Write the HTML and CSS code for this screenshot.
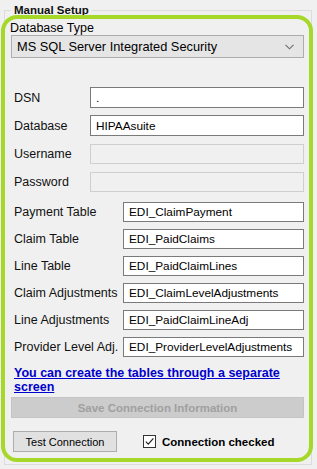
FILE: index.html
```html
<!DOCTYPE html>
<html lang="en">
<head>
    <meta charset="UTF-8">
    <meta name="viewport" content="width=device-width, initial-scale=1.0">
    <title>Manual Setup</title>
    <link rel="stylesheet" href="styles.css">
</head>
<body>
    <fieldset class="setup">
        <legend class="setup-title">Manual Setup</legend>

        <div class="type-label">Database Type</div>
        <div class="select">
            <span>MS SQL Server Integrated Security</span>
            <svg class="chevron" width="9" height="6" viewBox="0 0 9 6"><path d="M0.5 0.8 L4.5 4.8 L8.5 0.8" fill="none" stroke="#6d6d6d" stroke-width="1.1"/></svg>
        </div>

        <div class="form-grid conn-grid">
            <label>DSN</label><div class="field">.</div>
            <label>Database</label><div class="field">HIPAAsuite</div>
            <label>Username</label><div class="field is-disabled"></div>
            <label>Password</label><div class="field is-disabled"></div>
        </div>

        <div class="form-grid table-grid">
            <label>Payment Table</label><div class="field">EDI_ClaimPayment</div>
            <label>Claim Table</label><div class="field">EDI_PaidClaims</div>
            <label>Line Table</label><div class="field">EDI_PaidClaimLines</div>
            <label>Claim Adjustments</label><div class="field">EDI_ClaimLevelAdjustments</div>
            <label>Line Adjustments</label><div class="field">EDI_PaidClaimLineAdj</div>
            <label>Provider Level Adj.</label><div class="field">EDI_ProviderLevelAdjustments</div>
        </div>

        <a class="tables-link" href="#">You can create the tables through a separate<br>screen</a>

        <button class="save-btn" disabled>Save Connection Information</button>

        <div class="footer-row">
            <button class="test-btn">Test Connection</button>
            <label class="check">
                <span class="check-box">
                    <svg width="11" height="11" viewBox="0 0 11 11"><path d="M1.8 5.6 L4.3 8.2 L9.4 2.4" fill="none" stroke="#222" stroke-width="1.2"/></svg>
                </span>
                Connection checked
            </label>
        </div>
    </fieldset>

    <!-- highlight frame drawn over the group -->
    <div class="highlight"></div>
</body>
</html>
```

FILE: styles.css
```css
/* Base */
* {
    margin: 0;
    padding: 0;
    box-sizing: border-box;
}

body {
    font-family: 'Liberation Sans', Arial, sans-serif;
    font-size: 12.5px;
    color: #000;
    background: #f0f0f0;
    width: 317px;
    height: 469px;
    position: relative;
    overflow: hidden;
}

/* Group box */
.setup {
    margin: 3px 5px 0 4px;
    height: 462px;
    border: 1px solid #dcdcdc;
    padding: 0 7px 0 6px;
    display: flex;
    flex-direction: column;
}

.setup-title {
    margin-left: 0;
    padding: 0 3px;
    font-size: 11.5px;
    font-weight: 700;
    line-height: 14px;
    color: #111;
}

.type-label {
    line-height: 15px;
    margin-top: 4px;
    margin-left: -1px;
}

.select {
    height: 23px;
    margin-top: -1px;
    background: #e5e5e5;
    border: 1px solid #adadad;
    display: flex;
    align-items: center;
    justify-content: space-between;
    padding: 0 9px 0 5px;
    font-size: 12.8px;
}

/* Label / field rows */
.form-grid {
    display: grid;
    align-items: center;
    padding-left: 3px;
}

.conn-grid {
    grid-template-columns: 76px 1fr;
    grid-auto-rows: 21px;
    row-gap: 7px;
    margin-top: 29px;
}

.conn-grid .is-disabled {
    height: 20px;
}

.table-grid {
    grid-template-columns: 109px 1fr;
    grid-auto-rows: 20px;
    row-gap: 7px;
    margin-top: 10px;
}

.form-grid label {
    color: #111;
    white-space: nowrap;
}

.field {
    height: 100%;
    background: #fff;
    border: 1px solid #7a7a7a;
    padding: 0 4px 0 5px;
    display: flex;
    align-items: center;
    font-size: 11.8px;
    white-space: nowrap;
    overflow: hidden;
}

.field.is-disabled {
    background: #f0f0f0;
    border-color: #cfcfcf;
}

.tables-link {
    margin-top: 9px;
    padding-left: 3px;
    font-size: 12.5px;
    font-weight: 700;
    line-height: 14px;
    color: #0000cc;
}

/* Buttons */
.save-btn {
    margin-top: 3px;
    height: 21px;
    background: #cccccc;
    border: 1px solid #c4c4c4;
    color: #a0a0a0;
    font-family: inherit;
    font-size: 11.5px;
    font-weight: 700;
}

.footer-row {
    display: flex;
    align-items: center;
    margin-top: 13px;
    padding-left: 2px;
}

.test-btn {
    width: 104px;
    height: 21px;
    background: #e1e1e1;
    border: 1px solid #adadad;
    font-family: inherit;
    font-size: 11px;
    color: #000;
}

.check {
    display: flex;
    align-items: center;
    margin-left: 26px;
    font-size: 11.5px;
    font-weight: 700;
}

.check-box {
    width: 13px;
    height: 13px;
    border: 1px solid #333;
    background: #fff;
    margin-right: 6px;
    display: flex;
    align-items: center;
    justify-content: center;
}

/* Annotation frame */
.highlight {
    position: absolute;
    left: 1px;
    top: 15px;
    width: 312px;
    height: 447px;
    border: 4px solid #a6d82a;
    border-radius: 16px;
    pointer-events: none;
}
```
